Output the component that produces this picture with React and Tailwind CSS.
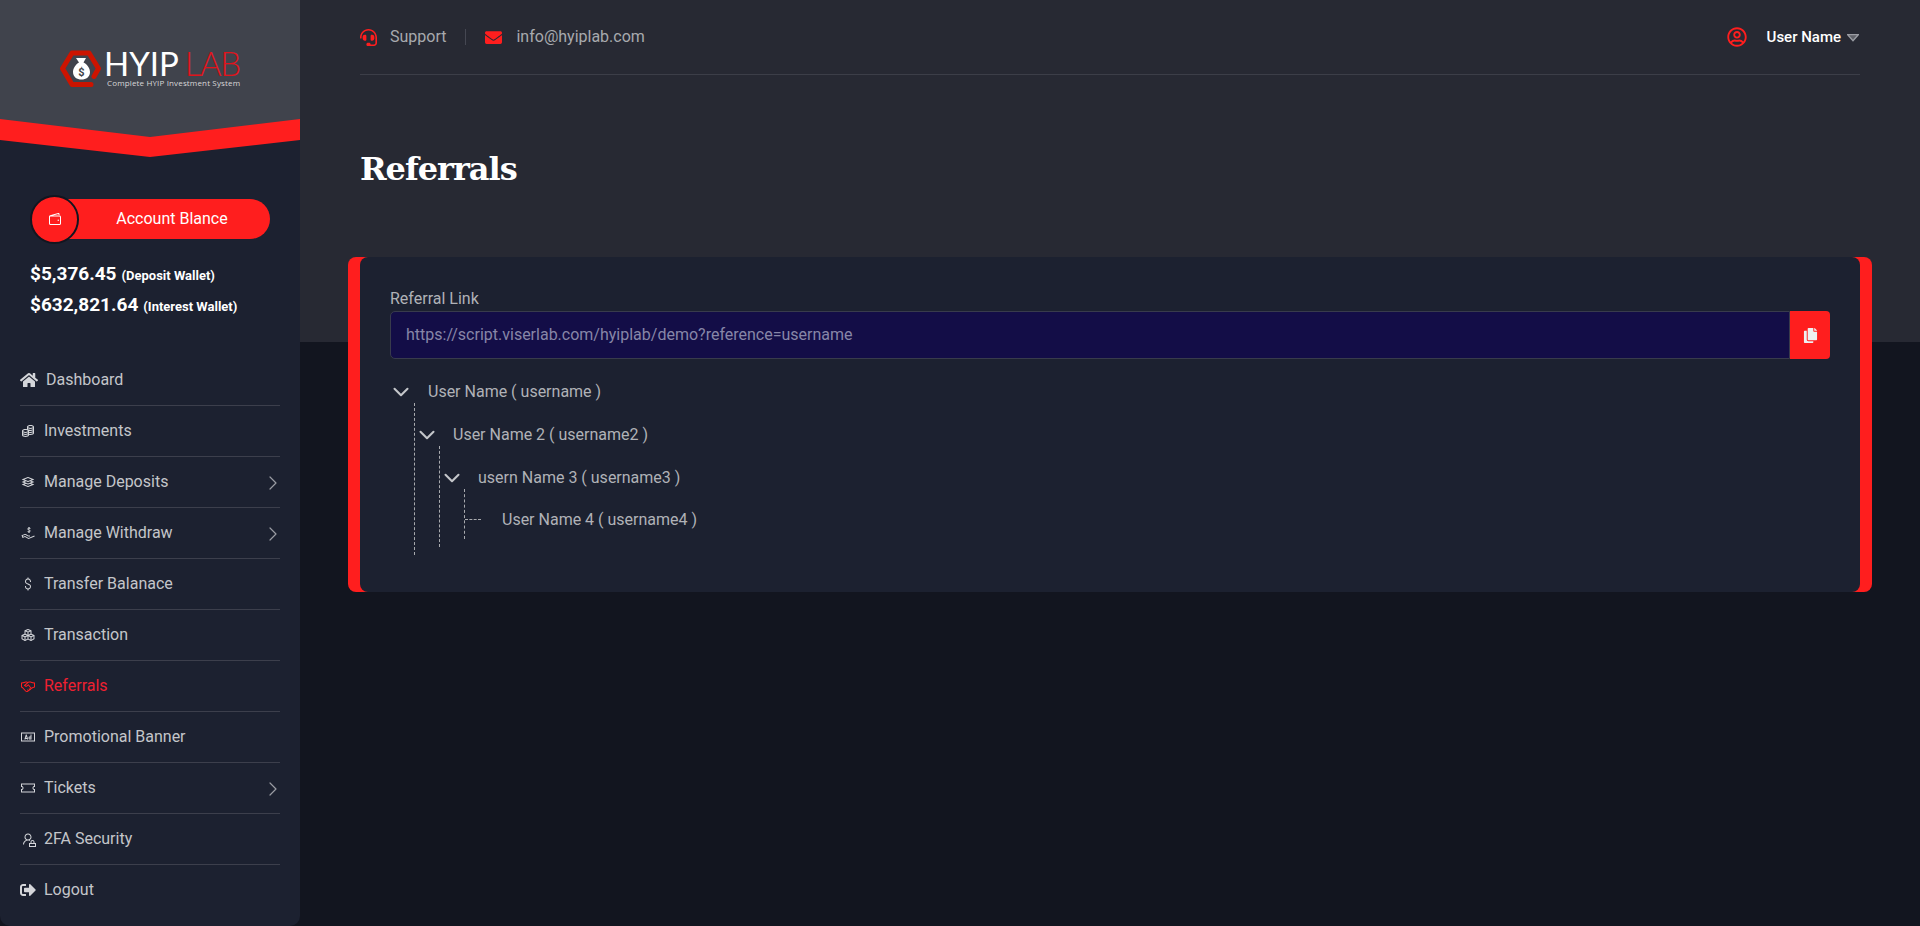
import React from "react";
import {
  LiaCoinsSolid, LiaLayerGroupSolid, LiaHandHoldingUsdSolid, LiaDollarSignSolid,
  LiaCubesSolid, LiaHandshake, LiaAdSolid, LiaTicketAltSolid, LiaUserLockSolid,
  LiaWalletSolid,
} from "react-icons/lia";
import { FaHome, FaEnvelope, FaRegUserCircle, FaCopy, FaSignOutAlt, FaHeadset } from "react-icons/fa";
import { ChevronRight, ChevronDown } from "lucide-react";

const menu = [
  { label: "Dashboard", icon: FaHome, size: 18, box: "w-[18px]" },
  { label: "Investments", icon: LiaCoinsSolid },
  { label: "Manage Deposits", icon: LiaLayerGroupSolid, arrow: true },
  { label: "Manage Withdraw", icon: LiaHandHoldingUsdSolid, arrow: true },
  { label: "Transfer Balanace", icon: LiaDollarSignSolid },
  { label: "Transaction", icon: LiaCubesSolid },
  { label: "Referrals", icon: LiaHandshake, active: true },
  { label: "Promotional Banner", icon: LiaAdSolid },
  { label: "Tickets", icon: LiaTicketAltSolid, arrow: true },
  { label: "2FA Security", icon: LiaUserLockSolid },
  { label: "Logout", icon: FaSignOutAlt, size: 16, last: true },
];

function MenuRow({ item }) {
  const Icon = item.icon;
  return (
    <div className={`flex h-[51px] items-center border-b ${item.last ? "border-transparent" : "border-[#3c3f4c]"}`}>
      <span className={`mr-[8px] flex items-center justify-center ${item.box || "w-[16px]"} ${item.active ? "text-[#ff1e1e]" : "text-[#d4d6da]"}`}>
        <Icon size={item.size || 16} />
      </span>
      <span className={`flex-1 text-[16px] ${item.active ? "text-[#ee2030]" : "text-[#c4c6ca]"}`}>{item.label}</span>
      {item.arrow && <ChevronRight size={24} strokeWidth={1.2} className="mr-[-5px] mt-[2px] text-[#9a9ca3]" />}
    </div>
  );
}

function Logo() {
  return (
    <div className="flex items-start">
      <svg width="41" height="38" viewBox="0 0 41 38" className="mr-[3px] shrink-0">
        <path d="M31 34.5H12L2.5 18.5 12 3h17l9.5 15.5-4.500 8" fill="none" stroke="#cc1400" strokeWidth="5" strokeLinejoin="round" strokeLinecap="round" />
        <path d="M16 8h10l-2.500 4.500c4 2 6.500 6 6.500 9.500 0 5-4 7.500-8.500 7.500S13 27 13 22c0-3.500 2.500-7.500 6-9.500z" fill="#fff" />
        <text x="21.500" y="26" textAnchor="middle" fontSize="11" fontWeight="700" fill="#404349" fontFamily="Roboto, sans-serif">$</text>
      </svg>
      <div className="flex flex-col font-['Lato',sans-serif]">
        <div className="flex h-[27px] items-center text-[33px] leading-[27px]">
          <span className="font-normal text-white">HYIP</span>
          <span className="ml-[6px] font-light tracking-[-1.5px] text-[#e0141c]">LAB</span>
        </div>
        <div className="ml-[3px] mt-[1px] whitespace-nowrap font-['Open_Sans',sans-serif] text-[8px] leading-[9px] tracking-[0.15px] text-[#d8d8d8]">Complete HYIP Investment System</div>
      </div>
    </div>
  );
}

function Sidebar() {
  return (
    <aside className="flex h-[926px] w-[300px] shrink-0 flex-col rounded-[10px] bg-[#1c2130]">
      <div className="h-[157px] rounded-t-[10px] bg-[#ff1e1e] [clip-path:polygon(0_0,100%_0,100%_140px,50%_157px,0_140px)]">
        <div className="flex h-[137px] items-start bg-[#40434c] pl-[60px] pt-[50px] [clip-path:polygon(0_0,100%_0,100%_119px,50%_137px,0_119px)]">
          <Logo />
        </div>
      </div>
      <div className="mt-[38px] px-[30px]">
        <div className="flex h-[48px] items-center">
          <span className="z-10 flex h-[49px] w-[49px] shrink-0 items-center justify-center rounded-full border-2 border-[#12151f] bg-[#ff1e1e] text-white">
            <LiaWalletSolid size={16} />
          </span>
          <span className="ml-[-19px] flex h-[40px] w-[210px] items-center justify-center rounded-r-full bg-[#ff1e1e] pl-[14px] text-[16px] text-white">Account Blance</span>
        </div>
        <div className="mt-[15px] flex items-baseline text-white">
          <span className="text-[19px] font-bold leading-[31px]">$5,376.45</span>
          <span className="ml-[5px] text-[13px] font-bold">(Deposit Wallet)</span>
        </div>
        <div className="flex items-baseline text-white">
          <span className="text-[19px] font-bold leading-[31px]">$632,821.64</span>
          <span className="ml-[5px] text-[13px] font-bold">(Interest Wallet)</span>
        </div>
      </div>
      <nav className="mt-[35px] px-[20px]">
        {menu.map((m) => <MenuRow key={m.label} item={m} />)}
      </nav>
    </aside>
  );
}

function Header() {
  return (
    <header className="flex h-[75px] items-center justify-between border-b border-[#3c3e48] text-[#a8aaae]">
      <div className="flex items-center text-[16px]">
        <FaHeadset size={17} className="text-[#ff1e1e]" />
        <span className="ml-[13px]">Support</span>
        <span className="mx-[19px] h-[16px] w-px bg-[#454752]" />
        <FaEnvelope size={17} className="text-[#ff1e1e]" />
        <span className="ml-[14px]">info@hyiplab.com</span>
      </div>
      <div className="mr-[1px] flex items-center">
        <FaRegUserCircle size={20} className="text-[#ff1e1e]" />
        <span className="ml-[20px] text-[15px] font-medium text-white">User Name</span>
        <svg width="12" height="8" viewBox="0 0 12 8" className="ml-[6px] mt-[1px]">
          <path d="M.7.7h10.600L6 6.800z" fill="#5f6169" stroke="#9a9ca3" strokeWidth="1.300" />
        </svg>
      </div>
    </header>
  );
}

function TreeRow({ children, indent, gap }) {
  return (
    <div className={`flex h-[23px] items-center text-[16px] text-[#b0b2b7] ${indent}`}>
      <ChevronDown size={26} strokeWidth={1.9} className={`shrink-0 text-[#c4c6ca] ${gap}`} />
      <span className="whitespace-nowrap">{children}</span>
    </div>
  );
}

function Tree() {
  const branch = "ml-[24px] border-l border-dashed border-[#a8aaae] pb-[8px]";
  return (
    <div className="mt-[21px]">
      <TreeRow indent="ml-[-2px]" gap="mr-[14px]">User Name ( username )</TreeRow>
      <div className={`${branch} pt-[20px]`}>
        <TreeRow indent="ml-[-1px]" gap="mr-[13px]">User Name 2 ( username2 )</TreeRow>
        <div className={`${branch} pt-[20px]`}>
          <TreeRow indent="ml-[-1px]" gap="mr-[13px]">usern Name 3 ( username3 )</TreeRow>
          <div className={`${branch} pt-[19px]`}>
            <div className="flex h-[23px] items-center text-[16px] text-[#b0b2b7]">
              <span className="mr-[21px] w-[16px] border-t border-dashed border-[#a8aaae]" />
              <span className="whitespace-nowrap">User Name 4 ( username4 )</span>
            </div>
          </div>
        </div>
      </div>
    </div>
  );
}

function Card() {
  return (
    <section className="mx-[-12px] mt-[66px] rounded-[8px] bg-[#ff1e1e] px-[12px]">
      <div className="h-[335px] rounded-[8px] bg-[#1c2130] px-[30px] pt-[30px]">
        <div className="text-[16px] leading-[24px] text-[#b0b2b7]">Referral Link</div>
        <div className="flex h-[48px]">
          <div className="flex flex-1 items-center rounded-l-[5px] border border-[#383b4c] bg-[#130d47] pl-[15px] text-[16px] text-[#8786a8]">https://script.viserlab.com/hyiplab/demo?reference=username</div>
          <button className="flex w-[40px] items-center justify-center rounded-r-[4px] bg-[#ff1e1e] text-[#eef0f2]"><FaCopy size={15} /></button>
        </div>
        <Tree />
      </div>
    </section>
  );
}

export default function App() {
  return (
    <div className="flex h-[926px] overflow-hidden bg-[linear-gradient(#272933_342px,#12151f_342px)] font-['Roboto',sans-serif]">
      <Sidebar />
      <main className="min-w-0 flex-1 px-[60px]">
        <Header />
        <h1 className="mt-[72px] font-['DejaVu_Serif',serif] text-[32px] font-bold leading-[44px] tracking-[-1px] text-white">Referrals</h1>
        <Card />
      </main>
    </div>
  );
}
